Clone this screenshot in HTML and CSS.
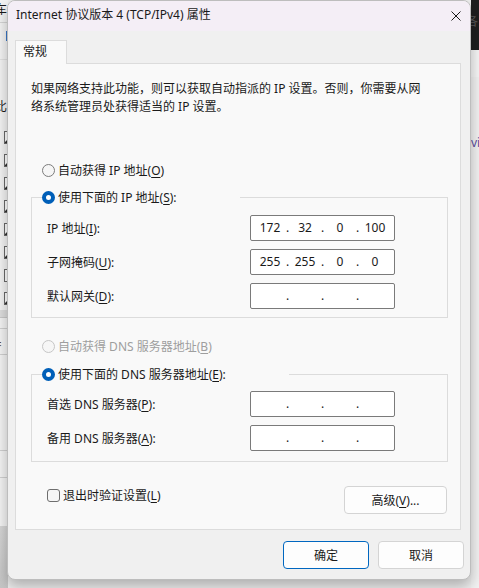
FILE: index.html
```html
<!DOCTYPE html>
<html lang="zh-CN">
<head>
    <meta charset="UTF-8">
    <title>Internet 协议版本 4 (TCP/IPv4) 属性</title>
    <link rel="stylesheet" href="styles.css">
</head>
<body>
    <!-- janela de fundo (parcialmente visível) -->
    <div class="desk">
        <div class="app-left">
            <div class="app-title"><span class="app-glyph">车</span></div>
            <div class="app-tabs"><span class="app-mark"></span></div>
            <div class="app-caption"><span class="app-glyph">比</span></div>
            <ul class="app-checks">
                <li class="on"></li>
                <li class="on"></li>
                <li class="on"></li>
                <li class="on"></li>
                <li class="on"></li>
                <li class="on"></li>
                <li></li>
                <li class="on"></li>
            </ul>
            <div class="app-band"></div>
            <div class="app-row"></div>
            <div class="app-row app-row-tall"><span class="app-glyph app-glyph-warm">扌</span></div>
            <div class="app-row app-row-big"></div>
            <div class="app-row app-row-small"></div>
            <div class="app-foot"></div>
        </div>
        <div class="app-right">
            <div class="app-dark"><span class="app-glyph">各</span></div>
            <div class="app-light"><span class="app-link">vi</span></div>
        </div>
    </div>

    <div class="dialog">
        <div class="titlebar">
            <span class="title">Internet 协议版本 4 (TCP/IPv4) 属性</span>
            <button class="close" aria-label="关闭">
                <svg width="10" height="10" viewBox="0 0 10 10">
                    <path d="M0.5 0.5 L9.5 9.5 M9.5 0.5 L0.5 9.5" stroke="#1a1a1a" stroke-width="1" fill="none"/>
                </svg>
            </button>
        </div>

        <div class="dialog-body">
            <div class="tab">常规</div>
            <div class="panel">
                <p class="desc">如果网络支持此功能，则可以获取自动指派的 IP 设置。否则，你需要从网络系统管理员处获得适当的 IP 设置。</p>

                <label class="radio-row first"><span class="radio"></span><span>自动获得 IP 地址(<u>O</u>)</span></label>

                <fieldset class="group">
                    <legend class="legend legend-ip"><span class="radio checked"></span><span>使用下面的 IP 地址(<u>S</u>):</span></legend>
                    <div class="field first">
                        <span class="field-label">IP 地址(<u>I</u>):</span>
                        <div class="ip"><span class="octet">172</span><span class="dot">.</span><span class="octet">32</span><span class="dot">.</span><span class="octet">0</span><span class="dot">.</span><span class="octet">100</span></div>
                    </div>
                    <div class="field">
                        <span class="field-label">子网掩码(<u>U</u>):</span>
                        <div class="ip"><span class="octet">255</span><span class="dot">.</span><span class="octet">255</span><span class="dot">.</span><span class="octet">0</span><span class="dot">.</span><span class="octet">0</span></div>
                    </div>
                    <div class="field">
                        <span class="field-label">默认网关(<u>D</u>):</span>
                        <div class="ip"><span class="octet"></span><span class="dot">.</span><span class="octet"></span><span class="dot">.</span><span class="octet"></span><span class="dot">.</span><span class="octet"></span></div>
                    </div>
                </fieldset>

                <label class="radio-row disabled"><span class="radio"></span><span>自动获得 DNS 服务器地址(<u>B</u>)</span></label>

                <fieldset class="group group-dns">
                    <legend class="legend legend-dns"><span class="radio checked"></span><span>使用下面的 DNS 服务器地址(<u>E</u>):</span></legend>
                    <div class="field first">
                        <span class="field-label">首选 DNS 服务器(<u>P</u>):</span>
                        <div class="ip"><span class="octet"></span><span class="dot">.</span><span class="octet"></span><span class="dot">.</span><span class="octet"></span><span class="dot">.</span><span class="octet"></span></div>
                    </div>
                    <div class="field">
                        <span class="field-label">备用 DNS 服务器(<u>A</u>):</span>
                        <div class="ip"><span class="octet"></span><span class="dot">.</span><span class="octet"></span><span class="dot">.</span><span class="octet"></span><span class="dot">.</span><span class="octet"></span></div>
                    </div>
                </fieldset>

                <div class="panel-foot">
                    <label class="check-row"><span class="checkbox"></span><span>退出时验证设置(<u>L</u>)</span></label>
                    <button class="btn btn-advanced">高级(<u>V</u>)...</button>
                </div>
            </div>

            <div class="actions">
                <button class="btn btn-default">确定</button>
                <button class="btn">取消</button>
            </div>
        </div>
    </div>
</body>
</html>
```

FILE: styles.css
```css
* {
    box-sizing: border-box;
}
body {
    margin: 0;
    width: 479px;
    height: 588px;
    overflow: hidden;
    position: relative;
    font-family: "Noto Sans", "Noto Sans CJK SC", sans-serif;
    font-size: 12px;
    color: #1a1a1a;
    background-color: #efefef;
}
u {
    text-decoration-thickness: 1px;
    text-underline-offset: 2px;
}

/* janela de fundo */
.desk {
    display: flex;
    justify-content: space-between;
    height: 588px;
}
.app-left {
    width: 8px;
    overflow: hidden;
    background-color: #f4f4f4;
    display: flex;
    flex-direction: column;
}
.app-glyph {
    display: block;
    margin-left: -5px;
    line-height: 18px;
    white-space: nowrap;
}
.app-glyph-warm {
    color: #5a4020;
}
.app-title {
    height: 23px;
    padding-top: 1px;
    border-bottom: 1px solid #d6d6d6;
}
.app-tabs {
    height: 37px;
    padding-top: 8px;
    border-bottom: 1px solid #e2e2e2;
}
.app-mark {
    display: block;
    margin-left: 6px;
    width: 2px;
    height: 10px;
    background-color: #3a78c8;
}
.app-caption {
    height: 66px;
    padding-top: 38px;
}
.app-checks {
    list-style: none;
    margin: 0;
    padding: 0;
}
.app-checks li {
    height: 23px;
    padding-top: 5px;
}
.app-checks li::before {
    content: "";
    display: block;
    margin-left: 4px;
    width: 11px;
    height: 11px;
    border: 1px solid #6a6a6a;
    background-color: #fff;
}
.app-checks li.on::before {
    background: linear-gradient(135deg, #fff 45%, #333 46%, #333 60%, #fff 61%);
}
.app-band {
    height: 8px;
    background-color: #dedede;
    border-bottom: 1px solid #c9c9c9;
}
.app-row {
    height: 11px;
    border-bottom: 1px solid #d0d0d0;
}
.app-row-tall {
    height: 26px;
    padding-top: 8px;
}
.app-row-big {
    height: 96px;
}
.app-row-small {
    height: 27px;
}
.app-foot {
    flex: 1;
    margin-top: 48px;
    background: linear-gradient(#d6d6d6, #c6c6c6);
}
.app-right {
    width: 8px;
    overflow: hidden;
    display: flex;
    flex-direction: column;
}
.app-dark {
    height: 50px;
    background-color: #1e1e1e;
    color: #5a5a5a;
    padding-top: 13px;
}
.app-light {
    flex: 1;
    background-color: #f2f2f2;
    border-top: 27px solid #f6f6f6;
    padding-top: 57px;
}
.app-link {
    display: block;
    color: #5b4ea0;
    line-height: 18px;
}

/* diálogo */
.dialog {
    position: absolute;
    left: 7px;
    top: 0;
    width: 464px;
    height: 580px;
    border: 1px solid #bdbdbd;
    border-radius: 8px;
    overflow: hidden;
    background-color: #f0f0f0;
    box-shadow: 0 6px 14px rgba(0, 0, 0, 0.28);
    display: flex;
    flex-direction: column;
}
.titlebar {
    height: 30px;
    display: flex;
    align-items: center;
    justify-content: space-between;
    padding-left: 8px;
    background-color: #f4eef6;
}
.title {
    line-height: 18px;
    padding-bottom: 2px;
}
.close {
    width: 28px;
    height: 30px;
    border: none;
    background: none;
    padding: 0;
    display: flex;
    align-items: center;
    justify-content: center;
}
.dialog-body {
    flex: 1;
    padding: 9px 0 0 7px;
}
.tab {
    position: relative;
    z-index: 1;
    width: 52px;
    height: 24px;
    margin-bottom: -1px;
    padding-left: 7px;
    line-height: 22px;
    background-color: #f9f9f9;
    border: 1px solid #dcdcdc;
    border-bottom: none;
}
.panel {
    width: 446px;
    padding: 16px 12px 15px 15px;
    background-color: #f9f9f9;
    border: 1px solid #dcdcdc;
}
.desc {
    margin: 0;
    width: 398px;
    line-height: 18px;
}
.radio-row {
    display: flex;
    align-items: center;
    gap: 3px;
    height: 20px;
    margin-left: 11px;
}
.radio-row.first {
    margin-top: 44px;
}
.radio-row.disabled {
    margin-top: 18px;
    color: #9e9e9e;
}
.radio {
    width: 13px;
    height: 13px;
    border-radius: 50%;
    border: 1px solid #7c7c7c;
    background-color: #f6f6f6;
    flex-shrink: 0;
}
.radio.checked {
    border: 4px solid #005fb8;
    background-color: #fff;
}
.disabled .radio {
    border-color: #c6c6c6;
}
.group {
    margin: 7px 0 0;
    width: 417px;
    padding: 0 0 8px 10px;
    border: 1px solid #dcdcdc;
}
.group-dns {
    margin-top: 8px;
    padding-bottom: 10px;
}
.legend {
    display: flex;
    align-items: center;
    gap: 3px;
    height: 20px;
    padding: 0;
    width: 198px;
}
.legend-dns {
    width: 247px;
}
.field {
    display: flex;
    align-items: center;
    margin-top: 8px;
    padding-left: 5px;
}
.group-dns .field.first {
    margin-top: 7px;
}
.field-label {
    width: 203px;
}
.ip {
    display: flex;
    width: 145px;
    height: 26px;
    padding-left: 4px;
    background-color: #fff;
    border: 1px solid #7a7a7a;
    border-radius: 2px;
    line-height: 23px;
}
.octet {
    width: 30px;
    text-align: center;
}
.dot {
    width: 5px;
    text-align: center;
}
.panel-foot {
    display: flex;
    justify-content: space-between;
    align-items: flex-start;
    margin-top: 24px;
    padding-left: 16px;
    padding-right: 1px;
}
.check-row {
    display: flex;
    align-items: center;
    gap: 3px;
    height: 18px;
}
.checkbox {
    width: 13px;
    height: 13px;
    border: 1px solid #6e6e6e;
    border-radius: 3px;
    background-color: #f6f6f6;
}
.btn {
    width: 86px;
    height: 28px;
    padding: 0;
    font-family: inherit;
    font-size: 12px;
    color: #1a1a1a;
    background-color: #fdfdfd;
    border: 1px solid #d4d4d4;
    border-radius: 4px;
}
.btn-advanced {
    width: 103px;
}
.btn-default {
    border-color: #0067c0;
}
.actions {
    display: flex;
    justify-content: flex-end;
    gap: 9px;
    margin-top: 11px;
    padding-right: 6px;
}
```
